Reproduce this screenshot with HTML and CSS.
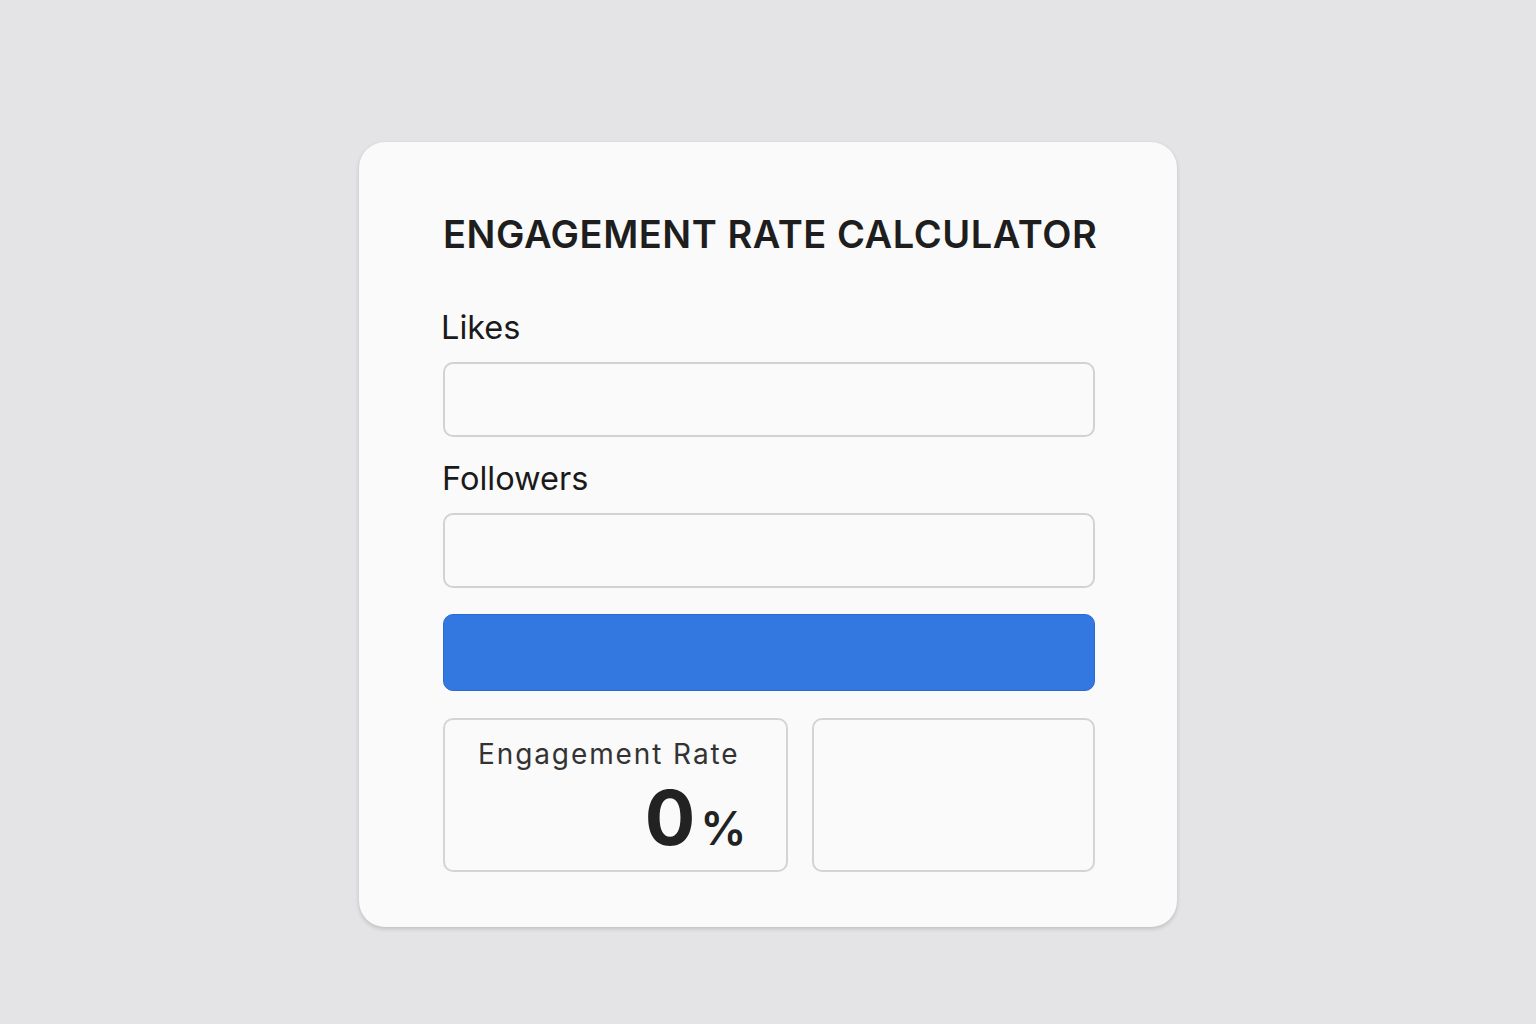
FILE: index.html
```html
<!DOCTYPE html>
<html lang="en">
<head>
<meta charset="utf-8">
<title>Engagement Rate Calculator</title>
<link rel="stylesheet" href="styles.css">
</head>
<body>
<main class="page">
  <section class="card">
    <h1 class="title">ENGAGEMENT RATE CALCULATOR</h1>
    <label class="label label-likes" for="likes">Likes</label>
    <input class="field" id="likes" type="text">
    <label class="label label-followers" for="followers">Followers</label>
    <input class="field" id="followers" type="text">
    <button class="calc" type="button" aria-label="Calculate"></button>
    <div class="results">
      <div class="result result-main">
        <div class="result-inner">
          <span class="result-label">Engagement Rate</span>
          <span class="result-value"><span class="num">0</span><span class="pct">%</span></span>
        </div>
      </div>
      <div class="result result-empty"></div>
    </div>
  </section>
</main>
</body>
</html>
```
FILE: styles.css
```css
* { box-sizing: border-box; }
html, body { margin: 0; padding: 0; }
body {
  background: #e4e4e6;
  font-family: Inter, "Noto Sans", sans-serif;
  color: #1f1f1f;
  width: 1536px;
  height: 1024px;
}
.page {
  display: flex;
  justify-content: center;
  padding-top: 142px;
}
.card {
  width: 818px;
  height: 785px;
  background: #fafafa;
  border-radius: 26px;
  box-shadow: 0 2px 4px rgba(0,0,0,0.16), 0 0 1px rgba(0,0,0,0.06);
  padding: 69px 82px 0 84px;
  display: flex;
  flex-direction: column;
}
.title {
  margin: 0;
  font-size: 38px;
  line-height: 46px;
  font-weight: 600;
  letter-spacing: 0.55px;
  color: #1e1e1e;
  white-space: nowrap;
}
.label {
  display: block;
  font-weight: 400;
  color: #1a1a1a;
  font-size: 32.5px;
  line-height: 38px;
}
.label-likes {
  margin-top: 52px;
  margin-left: -2px;
}
.label-followers {
  margin-top: 23px;
  margin-left: -1px;
}
.field {
  display: block;
  width: 652px;
  height: 75px;
  margin-top: 15px;
  border: 2px solid #d2d2d2;
  border-radius: 10px;
  background: #fafafa;
  outline: none;
}
.calc {
  display: block;
  width: 652px;
  height: 77px;
  margin-top: 26px;
  border: 1px solid #2a6ad6;
  border-radius: 10px;
  background: #3278e0;
  padding: 0;
}
.results {
  display: flex;
  gap: 24px;
  margin-top: 27px;
  width: 652px;
}
.result {
  height: 154px;
  border: 2px solid #d4d4d4;
  border-radius: 10px;
  background: #fafafa;
}
.result-main {
  width: 345px;
  padding: 17px 0 0 33px;
}
.result-empty { flex: 1; }
.result-inner {
  display: inline-flex;
  flex-direction: column;
  align-items: flex-end;
}
.result-label {
  font-size: 28px;
  line-height: 34px;
  letter-spacing: 1.9px;
  color: #333;
}
.result-value {
  display: flex;
  align-items: baseline;
  margin-top: 7px;
  margin-right: -7px;
}
.num {
  font-size: 75px;
  line-height: 80px;
  font-weight: 700;
  color: #222;
}
.pct {
  font-size: 46px;
  line-height: 50px;
  font-weight: 600;
  color: #222;
  margin-left: 5px;
}
```
